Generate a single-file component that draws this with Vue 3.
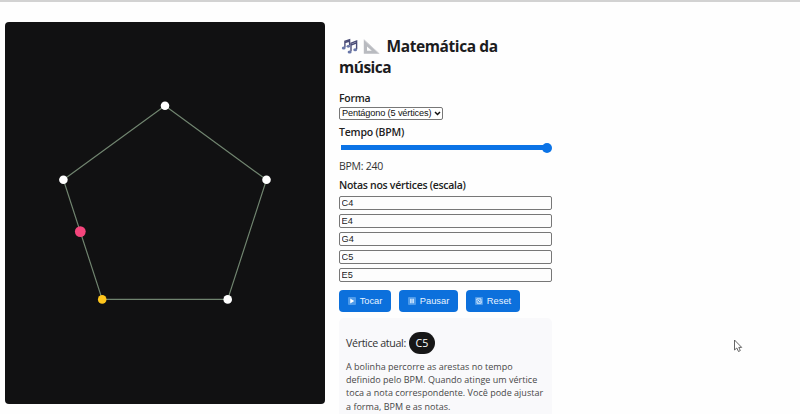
<script setup>
import { ref } from 'vue'

const notes = ref(['C4', 'E4', 'G4', 'C5', 'E5'])
const bpm = ref(240)
const shape = ref('5')
const current = ref('C5')
const vertices = [
  { x: 160, y: 83.7, active: false },
  { x: 261.5, y: 157.8, active: false },
  { x: 222.7, y: 277.4, active: false },
  { x: 97.2, y: 277.4, active: true },
  { x: 58.4, y: 157.8, active: false },
]
const points = vertices.map((v) => `${v.x},${v.y}`).join(' ')
</script>

<template>
  <div class="page">
    <main class="layout">
      <svg class="stage" viewBox="0 0 320 382.5">
        <polygon :points="points" fill="none" stroke="#70846f" stroke-width="1.2" />
        <circle
          v-for="(v, i) in vertices"
          :key="i"
          :cx="v.x"
          :cy="v.y"
          r="4.3"
          :fill="v.active ? '#ffc61c' : '#fff'"
        />
        <circle cx="75.3" cy="209.6" r="5.4" fill="#f4457c" />
      </svg>

      <section class="controls">
        <h1>
          <svg class="emoji notes-icon" viewBox="0 0 17 17">
            <g fill="none" stroke="#4a4c77" stroke-width="1.4">
              <path d="M3.9 9.5V3.2L8.6 1.8V7.6M3.9 4.6L8.6 3.2" />
              <path d="M10 13.2V5.2L15.6 3V11.2M10 7L15.6 4.8" />
            </g>
            <g fill="#6876a8">
              <ellipse cx="2.7" cy="10" rx="1.9" ry="1.5" />
              <ellipse cx="7.3" cy="8.3" rx="1.8" ry="1.4" />
              <ellipse cx="8.6" cy="14" rx="2" ry="1.6" />
              <ellipse cx="14.2" cy="11.8" rx="1.9" ry="1.5" />
            </g>
          </svg>
          <svg class="emoji square-icon" viewBox="0 0 17 17">
            <path d="M.8 1.2V15.8H16.6Z M4 8.4L8.8 12.8H4Z" fill="#b9bbc0" fill-rule="evenodd" />
            <path d="M1.2 2L15.6 15.2" stroke="#d5d6d9" stroke-width=".8" />
          </svg>
          <span class="title-text">Matemática da</span><br />
          <span class="title-end">música</span>
        </h1>

        <label class="label forma">Forma</label>
        <div class="select-wrap">
          <select v-model="shape"><option value="5">Pentágono (5 vértices)</option></select>
          <svg class="chevron" viewBox="0 0 7 5">
            <path d="M1 1L3.5 3.5L6 1" fill="none" stroke="#111" stroke-width="1.5" />
          </svg>
        </div>

        <label class="label tempo">Tempo (BPM)</label>
        <input v-model="bpm" class="range" type="range" min="30" max="240" />
        <div class="bpm">BPM: {{ bpm }}</div>

        <label class="label scale">Notas nos vértices (escala)</label>
        <div class="fields">
          <input v-for="(n, i) in notes" :key="i" v-model="notes[i]" class="note" type="text" />
        </div>

        <div class="buttons">
          <button class="play">
            <svg viewBox="0 0 9 9"><rect width="9" height="9" rx="1" fill="#4f9bea" /><path d="M2.5 1.8L7 4.5L2.5 7.2Z" fill="#fff" /></svg>
            <span>Tocar</span>
          </button>
          <button class="pause">
            <svg viewBox="0 0 9 9"><rect width="9" height="9" rx="1" fill="#4f9bea" /><path d="M2.5 2H4V7H2.5ZM5 2H6.5V7H5Z" fill="#e4f1ff" /></svg>
            <span>Pausar</span>
          </button>
          <button class="reset">
            <svg viewBox="0 0 9 9"><rect width="9" height="9" rx="1" fill="#4f9bea" /><path d="M2 4V2.1H6.7V5.5M7 5V7H2.3V4.2M3.2 3.2L5.8 5.8" fill="none" stroke="#e4f1ff" /></svg>
            <span>Reset</span>
          </button>
        </div>

        <div class="info">
          <div class="current"><span class="current-label">Vértice atual:</span><span class="badge">{{ current }}</span></div>
          <p>
            A bolinha percorre as arestas no tempo<br />
            definido pelo BPM. Quando atinge um vértice<br />
            toca a nota correspondente. Você pode ajustar<br />
            a forma, BPM e as notas.
          </p>
        </div>
      </section>
    </main>
    <svg class="cursor" viewBox="0 0 10 14">
      <path d="M1.5 1V11L3.8 9L5.5 12.5L7.3 11.6L5.8 8.4H8.7Z" fill="#fff" stroke="#555" stroke-width=".9" />
    </svg>
  </div>
</template>

<style>
body {
  margin: 0;
  background: #fefefe;
}
</style>

<style scoped>
.page {
  position: relative;
  box-sizing: border-box;
  width: 800px;
  height: 414px;
  overflow: hidden;
  border-top: 2px solid #d2d2d2;
  background: #fefefe;
  color: #222;
  font-family: "Open Sans", "Noto Sans", sans-serif;
}
.layout {
  display: flex;
  align-items: flex-start;
  gap: 14px;
  padding: 19.5px 0 0 5px;
}
.stage {
  flex: none;
  width: 320px;
  height: 382.5px;
  border-radius: 4px;
  background: #111112;
}
.controls {
  display: flex;
  flex-direction: column;
  width: 214px;
  padding-top: 14.5px;
}
h1 {
  margin: 0 0 13px;
  font-size: 15.5px;
  line-height: 21px;
  font-weight: 700;
  white-space: nowrap;
  height: 42px;
  color: #1c1c1e;
}
.emoji {
  width: 17px;
  height: 17px;
  vertical-align: -3px;
}
.notes-icon { margin: 0 5.5px 0 2px; }
.square-icon {
  margin-right: 7px;
  margin-left: -1px;
}
.title-text, .title-end { letter-spacing: -0.4px; }
.title-end { letter-spacing: -0.5px; }
.label {
  font-size: 10.5px;
  line-height: 14px;
  font-weight: 600;
  letter-spacing: -0.28px;
  white-space: nowrap;
}
.select-wrap {
  display: grid;
  width: 104px;
  height: 13px;
  margin-top: 1.5px;
}
select {
  grid-area: 1 / 1;
  appearance: none;
  box-sizing: border-box;
  width: 104px;
  height: 13px;
  padding: 0 2px;
  border: 1px solid #777;
  border-radius: 2px;
  background: #fff;
  color: #111;
  font: 9.2px/11px "Liberation Sans", sans-serif;
  letter-spacing: -0.14px;
}
.chevron {
  grid-area: 1 / 1;
  place-self: center end;
  width: 7px;
  height: 5px;
  margin-right: 2px;
  pointer-events: none;
}
.tempo {
  margin-top: 5.5px;
  letter-spacing: -0.2px;
}
.range {
  appearance: none;
  width: 211px;
  height: 11px;
  margin: 3px 0 0 2px;
  background: linear-gradient(#0b73e6, #0b73e6) left center / 207px 5px no-repeat;
  border-radius: 3px;
}
.range::-webkit-slider-thumb {
  appearance: none;
  width: 10px;
  height: 10px;
  border-radius: 50%;
  background: #0b73e6;
}
.bpm {
  margin-top: 4.5px;
  font-size: 10.5px;
  line-height: 16px;
  letter-spacing: -0.25px;
  color: #333;
}
.scale { margin-top: 4px; }
.fields {
  display: flex;
  flex-direction: column;
  gap: 4px;
  margin-top: 4px;
}
.note {
  box-sizing: border-box;
  width: 213px;
  height: 14px;
  padding: 0 1.5px;
  border: 1px solid #777;
  border-radius: 2px;
  background: #fdfdfd;
  color: #222;
  font: 9.2px/12px "Liberation Sans", sans-serif;
}
.buttons {
  display: flex;
  gap: 8px;
  margin-top: 8px;
}
button {
  display: flex;
  align-items: center;
  justify-content: center;
  gap: 4px;
  box-sizing: border-box;
  height: 22px;
  padding: 0;
  border: 0;
  border-radius: 4px;
  background: #0c70dc;
  color: #e8f3ff;
  font: 9.3px "Liberation Sans", sans-serif;
}
button svg { width: 8px; height: 8px; }
.play { width: 52px; }
.pause { width: 59px; }
.reset { width: 54px; }
.info {
  box-sizing: border-box;
  width: 213px;
  height: 110px;
  margin-top: 6px;
  padding: 14px 7px 0;
  border-radius: 5px;
  background: #f9f9fb;
}
.current {
  display: flex;
  align-items: center;
  gap: 3px;
  height: 23px;
  font-size: 10.7px;
  color: #333;
}
.current-label { letter-spacing: -0.36px; }
.badge {
  box-sizing: border-box;
  width: 26px;
  height: 22px;
  border-radius: 11px;
  background: #171717;
  color: #fff;
  text-align: center;
  line-height: 22px;
}
p {
  margin: 5px 0 0;
  font-size: 9px;
  line-height: 13.4px;
  letter-spacing: 0.02px;
  white-space: nowrap;
  color: #484848;
}
.cursor {
  position: absolute;
  left: 733px;
  top: 337px;
  width: 10px;
  height: 14px;
}
</style>
